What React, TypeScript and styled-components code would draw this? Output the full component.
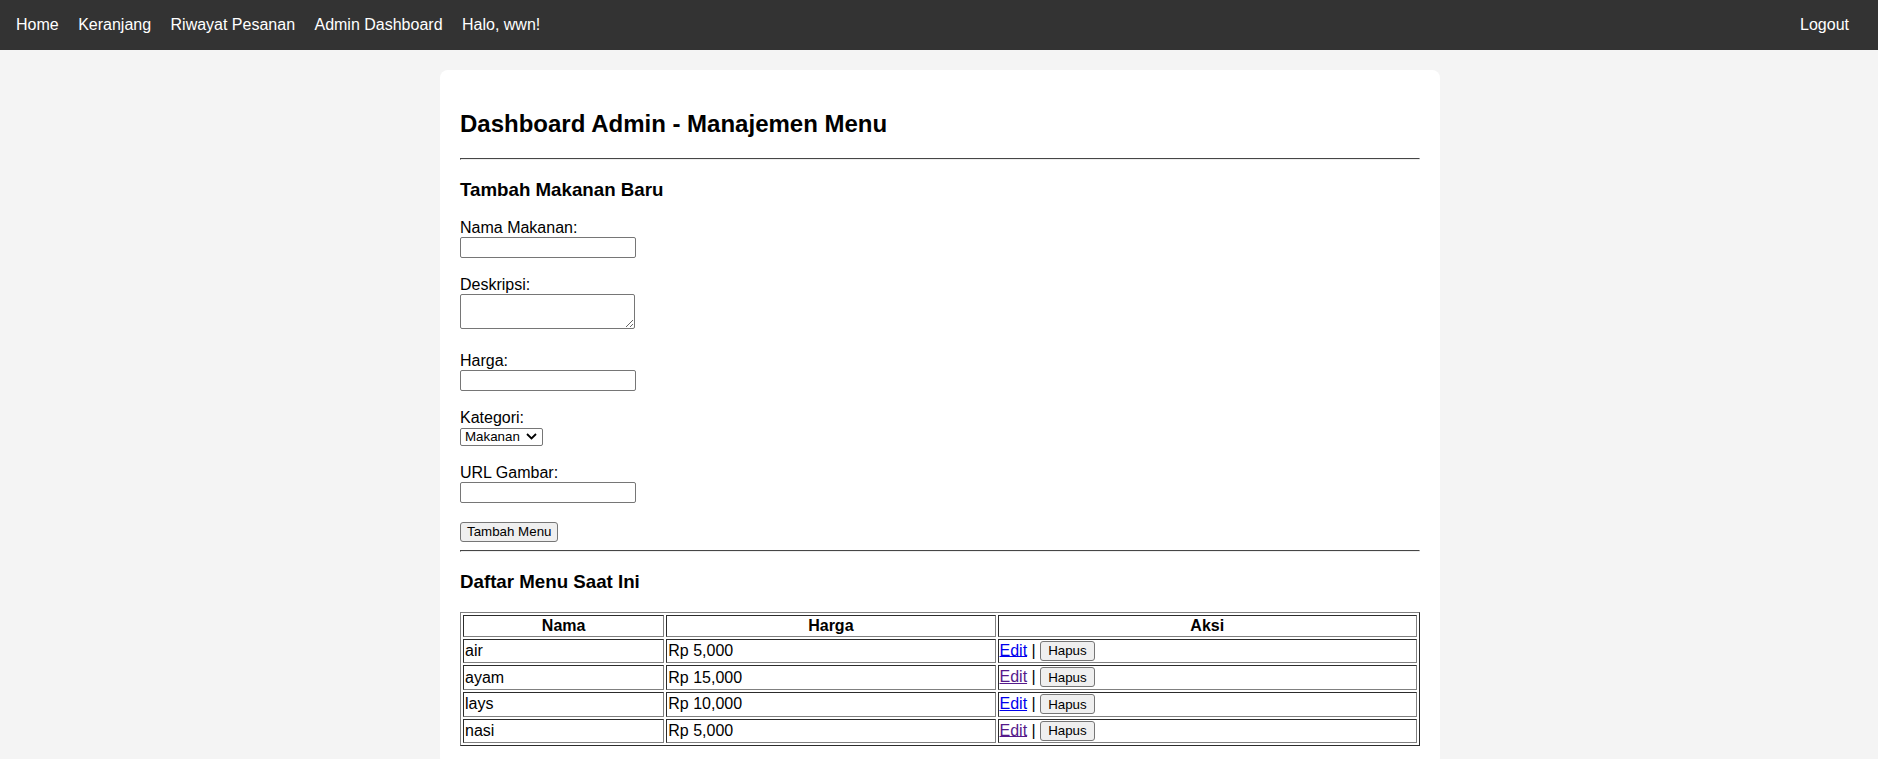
import React from "react";
import styled, { createGlobalStyle } from "styled-components";

const GlobalStyle = createGlobalStyle`
  html { scrollbar-width: none; }
  html::-webkit-scrollbar { display: none; }
  body {
    margin: 0;
    background: #f4f4f4;
    font-family: "Liberation Sans", Arial, sans-serif;
    font-size: 16px;
    color: #000;
  }
`;

const NavBar = styled.nav`
  display: flex;
  justify-content: space-between;
  align-items: center;
  height: 50px;
  padding: 0 14px 0 16px;
  background: #333;
`;

const NavGroup = styled.div`
  display: flex;
  align-items: center;
  gap: 19.45px;
`;

const NavLink = styled.a<{ $end?: boolean }>`
  color: #fff;
  text-decoration: none;
  margin-right: ${(p) => (p.$end ? "15px" : "0")};
`;

const NavText = styled.span`
  color: #fff;
`;

const Page = styled.div`
  padding-left: 2px;
`;

const Card = styled.main`
  box-sizing: border-box;
  max-width: 1000px;
  margin: 20px auto;
  padding: 20px;
  background: #fff;
  border-radius: 8px;
`;

const Title = styled.h2`
  font-size: 24px;
  font-weight: bold;
  margin: 0.83em 0;
`;

const Divider = styled.hr`
  margin: 8px 0;
  border: 1px inset #a0a0a0;
  border-color: #9a9a9a #eee #eee #9a9a9a;
  height: 0;
`;

const Subtitle = styled.h3`
  font-size: 18.72px;
  font-weight: bold;
  margin: 1em 0;
`;

const FormGroup = styled.div<{ $space: number }>`
  margin-bottom: ${(p) => p.$space}px;
`;

const Label = styled.label`
  display: block;
`;

const controlFont = `
  font-family: "Liberation Sans", Arial, sans-serif;
  font-size: 13.333px;
`;

const TextInput = styled.input`
  ${controlFont}
  box-sizing: border-box;
  width: 176px;
  height: 21px;
  padding: 1px 2px;
  border: 1px solid #767676;
  border-radius: 2px;
  background: #fff;
`;

const TextArea = styled.textarea`
  font-family: "Liberation Mono", monospace;
  font-size: 13.333px;
  box-sizing: border-box;
  width: 175px;
  height: 35px;
  padding: 2px;
  border: 1px solid #767676;
  border-radius: 2px;
  vertical-align: baseline;
`;

const SelectWrap = styled.span`
  position: relative;
  display: inline-block;
`;

const Select = styled.select`
  ${controlFont}
  appearance: none;
  -webkit-appearance: none;
  box-sizing: border-box;
  width: 83px;
  height: 18px;
  padding: 0 0 0 4px;
  color: #000;
  background: #fff;
  border: 1px solid #767676;
  border-radius: 2px;
`;

const Chevron = styled.svg`
  position: absolute;
  right: 6px;
  top: 50%;
  margin-top: -3px;
  pointer-events: none;
`;

const Button = styled.button<{ $wide?: boolean }>`
  ${controlFont}
  box-sizing: border-box;
  height: 20px;
  color: #000;
  padding: ${(p) => (p.$wide ? "1px 7px" : "1px 6px")};
  margin-bottom: ${(p) => (p.$wide ? "0.6px" : "0")};
  background: #efefef;
  border: 1px solid #767676;
  border-radius: 3px;
`;

const Table = styled.table`
  width: 100%;
  border: 1px outset grey;
  border-spacing: 2px;
`;

const HeadCell = styled.th`
  border: 1px inset grey;
  padding: 1px;
  font-weight: bold;
  text-align: center;
`;

const Cell = styled.td`
  border: 1px inset grey;
  padding: 1px;
`;

const EditLink = styled.a<{ $visited?: boolean }>`
  color: ${(p) => (p.$visited ? "#551a8b" : "#0000ee")};
  text-decoration: underline;
`;

const menu = [
  { nama: "air", harga: "Rp 5,000", visited: false },
  { nama: "ayam", harga: "Rp 15,000", visited: true },
  { nama: "lays", harga: "Rp 10,000", visited: false },
  { nama: "nasi", harga: "Rp 5,000", visited: true },
];

export default function App() {
  return (
    <>
      <GlobalStyle />
      <NavBar>
        <NavGroup>
          <NavLink href="#">Home</NavLink>
          <NavLink href="#">Keranjang</NavLink>
          <NavLink href="#">Riwayat Pesanan</NavLink>
          <NavLink href="#">Admin Dashboard</NavLink>
          <NavText>Halo, wwn!</NavText>
        </NavGroup>
        <NavLink href="#" $end>
          Logout
        </NavLink>
      </NavBar>
      <Page>
        <Card>
          <Title>Dashboard Admin - Manajemen Menu</Title>
          <Divider />
          <Subtitle>Tambah Makanan Baru</Subtitle>
          <form onSubmit={(e) => e.preventDefault()}>
            <FormGroup $space={17.5}>
              <Label>Nama Makanan:</Label>
              <TextInput type="text" />
            </FormGroup>
            <FormGroup $space={19}>
              <Label>Deskripsi:</Label>
              <TextArea />
            </FormGroup>
            <FormGroup $space={18.3}>
              <Label>Harga:</Label>
              <TextInput type="number" />
            </FormGroup>
            <FormGroup $space={18.6}>
              <Label>Kategori:</Label>
              <SelectWrap>
                <Select defaultValue="Makanan">
                  <option>Makanan</option>
                  <option>Minuman</option>
                </Select>
                <Chevron width="11" height="7" viewBox="0 0 11 7">
                  <path d="M1 1 L5.5 5.5 L10 1" stroke="#000" strokeWidth="1.8" fill="none" />
                </Chevron>
              </SelectWrap>
            </FormGroup>
            <FormGroup $space={18.5}>
              <Label>URL Gambar:</Label>
              <TextInput type="text" />
            </FormGroup>
            <FormGroup $space={8.8}>
              <Button type="submit">Tambah Menu</Button>
            </FormGroup>
          </form>
          <Divider />
          <Subtitle>Daftar Menu Saat Ini</Subtitle>
          <Table>
            <thead>
              <tr>
                <HeadCell>Nama</HeadCell>
                <HeadCell>Harga</HeadCell>
                <HeadCell>Aksi</HeadCell>
              </tr>
            </thead>
            <tbody>
              {menu.map((m) => (
                <tr key={m.nama}>
                  <Cell>{m.nama}</Cell>
                  <Cell>{m.harga}</Cell>
                  <Cell>
                    <EditLink href="#" $visited={m.visited}>
                      Edit
                    </EditLink>{" "}
                    | <Button type="button" $wide>Hapus</Button>
                  </Cell>
                </tr>
              ))}
            </tbody>
          </Table>
        </Card>
      </Page>
    </>
  );
}
